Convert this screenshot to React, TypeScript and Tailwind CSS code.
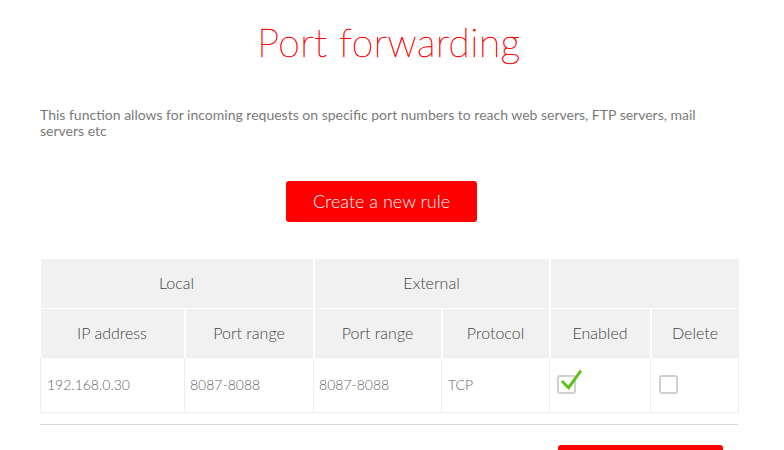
import React from 'react';

const FONT = { fontFamily: 'Lato, "Open Sans", sans-serif' };

function Check({ checked }: { checked?: boolean }) {
  return (
    <div className="relative w-[19px] h-[19px] rounded-[3px] border-2 border-[#cfcfcf] bg-white">
      {checked && (
        <svg viewBox="0 0 24 24" className="absolute left-[1px] top-[-8px] w-[23px] h-[23px]">
          <path d="M3 13.5 L9 19.5 L21 3" fill="none" stroke="#5bc21c" strokeWidth="3" strokeLinecap="square" />
        </svg>
      )}
    </div>
  );
}

export default function App() {
  return (
    <div className="w-[784px] h-[450px] overflow-hidden bg-white" style={FONT}>
      <div className="ml-10 w-[698px]">
        {/* Title */}
        <h1 className="pt-[14px] text-center text-[39px] leading-[56px] font-thin text-[#ff0000] tracking-[0.5px] [-webkit-text-stroke:0.5px_#ff0000]">
          Port forwarding
        </h1>

        {/* Description */}
        <p className="mt-[37px] text-[14px] leading-4 text-[#7a7a7a]">
          This function allows for incoming requests on specific port numbers to reach web servers, FTP servers, mail
          servers etc
        </p>

        {/* Create button */}
        <div className="mt-[42px] flex justify-center pr-[15px]">
          <button className="w-[191px] h-[41px] rounded-[3px] bg-[#ff0000] text-white text-[18px] font-light">
            Create a new rule
          </button>
        </div>

        {/* Rules table */}
        <table className="mt-[37px] w-[698px] border-collapse table-fixed text-[16px]">
          <colgroup>
            <col className="w-[144px]" />
            <col className="w-[129px]" />
            <col className="w-[128px]" />
            <col className="w-[108px]" />
            <col className="w-[101px]" />
            <col className="w-[88px]" />
          </colgroup>
          <thead className="bg-[#f1f1f1] text-[#444]">
            <tr className="h-[49px]">
              <th colSpan={2} className="font-light border-r-2 border-b border-white">Local</th>
              <th colSpan={2} className="font-light border-r-2 border-b border-white">External</th>
              <th colSpan={2} className="font-light border-b border-white"></th>
            </tr>
            <tr className="h-[49px]">
              <th className="font-light border-r-2 border-white">IP address</th>
              <th className="font-light border-r-2 border-white">Port range</th>
              <th className="font-light border-r-2 border-white">Port range</th>
              <th className="font-light border-r-2 border-white">Protocol</th>
              <th className="font-light border-r-2 border-white">Enabled</th>
              <th className="font-light">Delete</th>
            </tr>
          </thead>
          <tbody className="text-[14px] text-[#666] font-light">
            <tr className="h-[55px]">
              <td className="px-[6px] border border-[#eeeeee]">192.168.0.30</td>
              <td className="px-[5px] border border-[#eeeeee]">8087-8088</td>
              <td className="px-[5px] border border-[#eeeeee]">8087-8088</td>
              <td className="px-[6px] border border-[#eeeeee]">TCP</td>
              <td className="px-[7px] border border-[#eeeeee]">
                <Check checked />
              </td>
              <td className="px-[8px] border border-[#eeeeee]">
                <Check />
              </td>
            </tr>
          </tbody>
        </table>

        <div className="mt-[11px] h-px bg-[#d9d9d9]" />

        <div className="mt-[20px] flex justify-end pr-[15px]">
          <div className="w-[165px] h-[40px] rounded-t-[3px] bg-[#ff0000]" />
        </div>
      </div>
    </div>
  );
}
